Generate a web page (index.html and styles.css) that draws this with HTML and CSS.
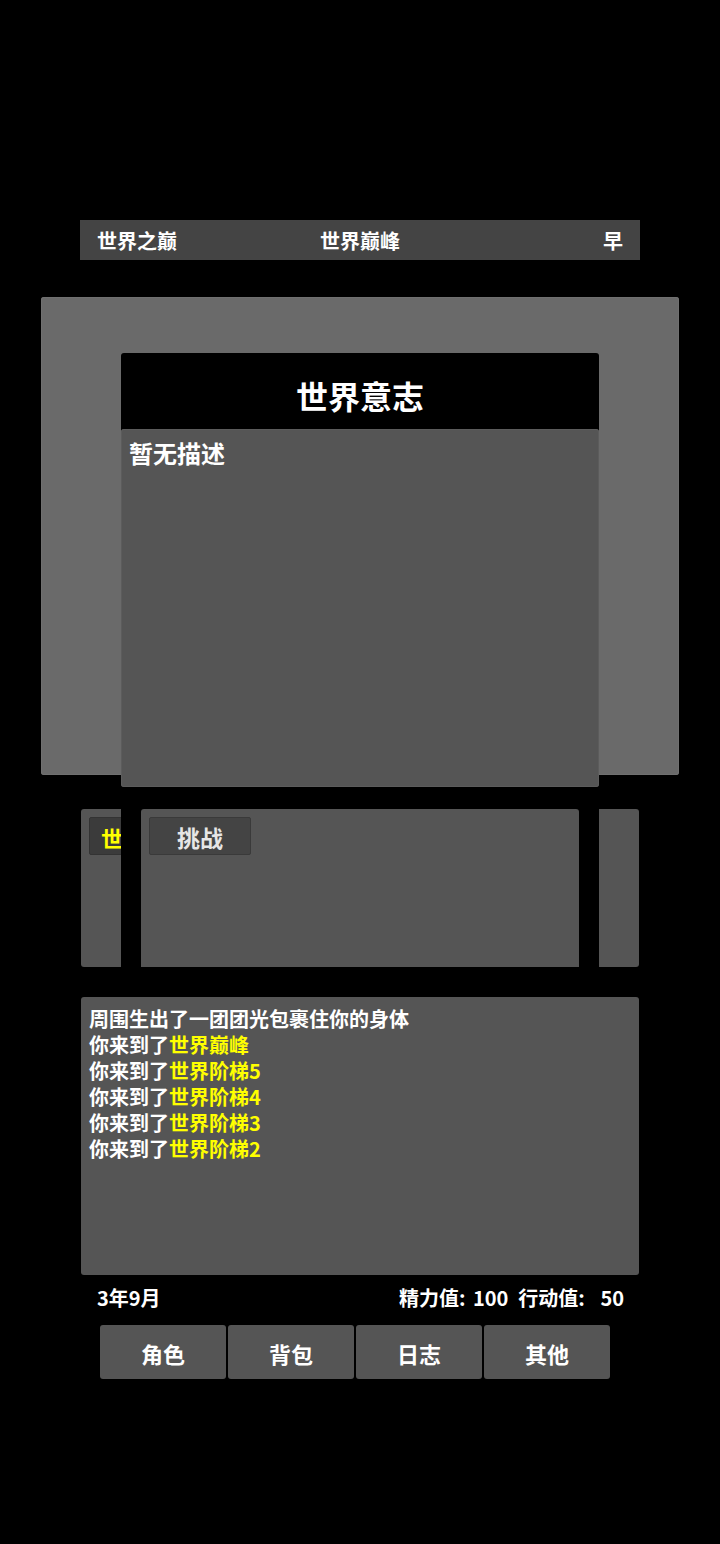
FILE: index.html
```html
<!DOCTYPE html>
<html lang="zh">
<head>
<meta charset="utf-8">
<title>世界之巅</title>
<link rel="stylesheet" href="styles.css">
</head>
<body>
<div class="page">
  <div class="topbar">
    <span class="tb-left">世界之巅</span>
    <span class="tb-center">世界巅峰</span>
    <span class="tb-right">早</span>
  </div>

  <div class="scene"></div>

  <div class="tabs-panel">
    <div class="tab-btn">世界</div>
  </div>

  <div class="log-panel">
    <div class="log-line">周围生出了一团团光包裹住你的身体</div>
    <div class="log-line">你来到了<span class="hl">世界巅峰</span></div>
    <div class="log-line">你来到了<span class="hl">世界阶梯5</span></div>
    <div class="log-line">你来到了<span class="hl">世界阶梯4</span></div>
    <div class="log-line">你来到了<span class="hl">世界阶梯3</span></div>
    <div class="log-line">你来到了<span class="hl">世界阶梯2</span></div>
  </div>

  <div class="status">
    <span class="date">3年9月</span>
    <span class="stats"><span class="stat">精力值: <b>100</b></span><span class="stat">行动值: <b class="wide">50</b></span></span>
  </div>

  <div class="nav">
    <div class="nav-btn">角色</div>
    <div class="nav-btn">背包</div>
    <div class="nav-btn">日志</div>
    <div class="nav-btn">其他</div>
  </div>

  <div class="modal">
    <div class="modal-head">世界意志</div>
    <div class="modal-body">暂无描述</div>
    <div class="modal-actions">
      <div class="action-panel">
        <div class="action-btn">挑战</div>
      </div>
    </div>
  </div>
</div>
</body>
</html>
```

FILE: styles.css
```css
html, body {
  margin: 0;
  padding: 0;
  background: #000;
}
body {
  font-family: "Noto Sans CJK SC", "Noto Sans", sans-serif;
  font-weight: 700;
  color: #fff;
}
.page {
  position: relative;
  width: 720px;
  height: 1544px;
  padding-top: 220px;
  box-sizing: border-box;
}
.topbar {
  margin: 0 80px;
  height: 40px;
  background: #444;
  display: grid;
  grid-template-columns: 1fr auto 1fr;
  align-items: center;
  padding: 0 17px;
  font-size: 20px;
  line-height: 42px;
}
.tb-left { justify-self: start; }
.tb-center { justify-self: center; }
.tb-right { justify-self: end; }

.scene {
  margin: 37px 41px 0 41px;
  height: 478px;
  background: #6a6a6a;
  border-radius: 3px;
  box-shadow: inset 0 0 0 1px #707070;
}

.tabs-panel {
  margin: 34px 81px 0 81px;
  height: 158px;
  background: #555;
  border-radius: 3px;
  padding: 8px;
  box-sizing: border-box;
}
.tab-btn {
  width: 102px;
  height: 38px;
  box-sizing: border-box;
  background: #3b3b3b;
  border: 1px solid #333;
  border-radius: 2px;
  color: #ffff00;
  font-size: 22px;
  line-height: 38px;
  padding-left: 11px;
  white-space: nowrap;
  overflow: hidden;
}

.log-panel {
  margin: 30px 81px 0 81px;
  height: 278px;
  background: #555;
  border-radius: 3px;
  padding: 9px 8px;
  box-sizing: border-box;
  font-size: 20px;
  line-height: 26px;
}
.hl { color: #ffff00; }

.status {
  margin: 10px 96px 0 100px;
  height: 26px;
  display: flex;
  justify-content: space-between;
  align-items: center;
  font-size: 20px;
  line-height: 26px;
}
.date { margin-left: -3px; }
.stats {
  display: flex;
  gap: 10px;
}
.stat b { font-weight: 700; margin-left: 3px; }
.stat b.wide { margin-left: 11px; }

.nav {
  margin: 14px 110px 0 100px;
  display: grid;
  grid-template-columns: repeat(4, 126px);
  gap: 2px;
}
.nav-btn {
  height: 54px;
  background: #555;
  border-radius: 3px;
  text-align: center;
  font-size: 22px;
  line-height: 56px;
  color: #fff;
}

.modal {
  position: absolute;
  left: 121px;
  top: 353px;
  width: 478px;
  background: #000;
  border-radius: 3px 3px 0 0;
}
.modal-head {
  height: 76px;
  text-align: center;
  font-size: 32px;
  line-height: 84px;
}
.modal-body {
  height: 358px;
  background: #555;
  border-radius: 3px;
  box-shadow: inset 0 0 0 1px #5c5c5c;
  padding: 6px 8px;
  box-sizing: border-box;
  font-size: 24px;
  line-height: 36px;
}
.modal-actions {
  padding: 22px 20px 0 20px;
}
.action-panel {
  height: 158px;
  background: #555;
  border-radius: 3px 3px 0 0;
  padding: 8px;
  box-sizing: border-box;
}
.action-btn {
  width: 102px;
  height: 38px;
  box-sizing: border-box;
  background: #444;
  border: 1px solid #3a3a3a;
  border-radius: 2px;
  text-align: center;
  color: #e6e6e6;
  font-size: 23px;
  line-height: 38px;
}
```
